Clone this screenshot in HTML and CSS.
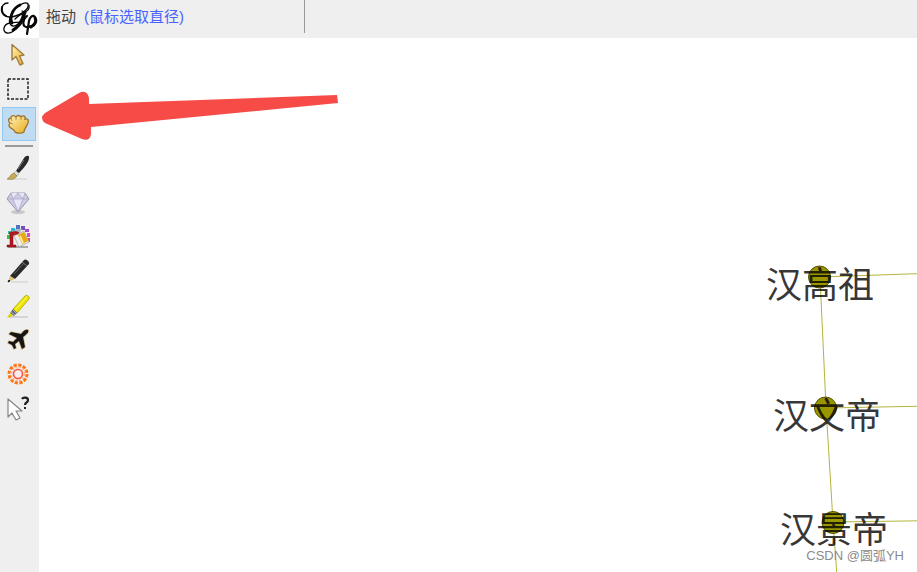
FILE: index.html
```html
<!DOCTYPE html>
<html lang="zh-CN">
<head>
<meta charset="utf-8">
<title>Gephi</title>
<link rel="stylesheet" href="styles.css">
</head>
<body>
<div class="app">
  <div class="logo">
    <svg viewBox="0 0 39 38" fill="none" stroke="#080808" stroke-linecap="round">
      <path d="M8 3C-1 3 0 17 9 17C19 17 30 9 28 4C26 1 14 6 11 15C7 24 12 29 18 24C22 21 25 15 26 12" stroke-width="1.400"/>
      <path d="M2 7C1 11 3 15 6 16" stroke-width="2"/>
      <path d="M20 5C13 8 9 17 12 23" stroke-width="2.800"/>
      <path d="M15 19C22 12 27 13 24 19C21 26 12 34 7 33C2 32 3 24 10 23C15 22 20 23 24 21" stroke-width="1.300"/>
      <path d="M24 13C22 21 18 27 13 30" stroke-width="2.800"/>
      <path d="M29 5C30 10 26 13 22 11" stroke-width="1.200"/>
      <path d="M27 16C22 20 22 28 28 27C33 27 37 22 35 17C33 14 30 17 29 21L27 34" stroke-width="2.200"/>
      <path d="M35 18C37 21 35 25 31 27" stroke-width="3"/>
    </svg>
  </div>
  <header class="bar">
    <span class="mode">拖动</span>
    <span class="hint">(鼠标选取直径)</span>
    <span class="divider"></span>
  </header>
  <nav class="tools">
    <div class="group group-select">
      <button class="tool" aria-label="选择"><svg viewBox="0 0 28 28"><defs><linearGradient id="gold" x2="1" y2="1"><stop offset="0" stop-color="#fff0b8"/><stop offset="1" stop-color="#e8ad1e"/></linearGradient></defs><path d="M8 3.500V19L12 15.500L16 24L19 22.500L15.500 15L20 14Z" fill="url(#gold)" stroke="#a17c42" stroke-width="1.400" stroke-linejoin="round"/></svg></button>
      <button class="tool" aria-label="矩形选择"><svg viewBox="0 0 28 28"><rect x="4" y="4" width="20" height="20" fill="none" stroke="#222" stroke-width="1.500" stroke-dasharray="3 1.500"/></svg></button>
      <button class="tool active" aria-label="拖动"><svg viewBox="0 0 28 28"><path d="M6 13C4 12 4 8 7 8C7 5 10 5 12 7C13 5 16 5 17 7C19 5 22 6 21 9C25 8 25 12 23 15C22 18 20 19 20 22C17 24 12 23 11 22C11 19 6 19 5 16C5 14 6 13 6 13Z" fill="url(#gold)" stroke="#9b7430" stroke-width="1.300"/><path d="M7 8L8 11M12 7V10M17 7V10M6 13L9 14" fill="none" stroke="#b69147"/></svg></button>
    </div>
    <hr class="rule">
    <div class="group group-edit">
      <button class="tool" aria-label="画笔"><svg viewBox="0 0 28 28"><path d="M8 25H23" stroke="#ccc"/><path d="M12 17L20 4C22 1 26 1 25 4C25 8 19 15 15 19Z" fill="#292929"/><path d="M14 15L20 6" stroke="#777"/><path d="M12 17L15 20L13 22L10 19Z" fill="#ddd" stroke="#999" stroke-width=".5"/><path d="M10 19L13 22C11 25 8 26 3 25C7 23 5 21 10 19Z" fill="#c8a956" stroke="#8d733c" stroke-width=".6"/></svg></button>
      <button class="tool" aria-label="尺寸"><svg viewBox="0 0 28 28"><ellipse cx="14" cy="23" rx="7" ry="2" fill="#c8c8c8"/><path d="M7 4H21L25 10L14 23L3 10Z" fill="#cdcbe5" stroke="#8986a1" stroke-width=".8"/><path d="M7 4L9 10L14 4L19 10L21 4ZM9 10L14 23L19 10Z" fill="#e7e6f7"/><path d="M3 10H25M7 4L9 10L14 4L19 10L21 4M9 10L14 23L19 10" fill="none" stroke="#a6a3bf" stroke-width=".7"/></svg></button>
      <button class="tool" aria-label="着色"><svg viewBox="0 0 28 28"><path d="M4 24H24" stroke="#aaa" stroke-width="2"/><rect x="3" y="12" width="3" height="4" fill="#32c43b"/><rect x="4" y="8" width="4" height="3" fill="#2dc799"/><rect x="7" y="5" width="4" height="3" fill="#26b7df"/><rect x="12" y="2" width="4" height="4" fill="#5471c7"/><rect x="17" y="3" width="4" height="4" fill="#7450b6"/><rect x="21" y="6" width="4" height="3" fill="#a54ad0"/><rect x="23" y="10" width="3" height="4" fill="#e647bd"/><rect x="23" y="15" width="3" height="4" fill="#ec476e"/><path d="M10 13L20 8L25 19L15 24Z" fill="#eeeeec" stroke="#999" stroke-width=".7"/><path d="M14 12L20 9L24 18L18 21Z" fill="#e7a80f"/><path d="M16 13L19 20" stroke="#ffe69b" stroke-width="2"/><path d="M11 6H18L15 11H10Z" fill="#aeb5c2"/><path d="M5 10C8 8 14 8 15 10C13 12 10 11 9 13V22H12V24H3V22H6V12Z" fill="#b51620" stroke="#800b14" stroke-width=".5"/></svg></button>
      <button class="tool" aria-label="铅笔"><svg viewBox="0 0 28 28"><path d="M7 25H24" stroke="#ccc"/><path d="M6 19L20 3C22 1 26 5 25 7L11 22Z" fill="#292929"/><path d="M10 17L20 6" stroke="#646464"/><path d="M18 5L23 9" stroke="#777"/><path d="M6 19L11 22L4 25Z" fill="#dcc07e"/><path d="M5 23L6 24L4 25Z" stroke="#222"/></svg></button>
      <button class="tool" aria-label="荧光笔"><svg viewBox="0 0 28 28"><path d="M5 25H24" stroke="#bbb"/><path d="M9 17L21 4C23 2 26 5 25 7L13 21Z" fill="#eee600" stroke="#a5a400" stroke-width=".8"/><path d="M12 17L23 5" stroke="#fff872"/><path d="M9 17L13 21L10 24L6 21Z" fill="#686877"/><path d="M7 20L11 23M9 18L12 21" stroke="#aaa"/><path d="M6 21L9 24L3 26Z" fill="#d8d400"/></svg></button>
      <button class="tool" aria-label="最短路径"><svg viewBox="0 0 28 28"><path d="M24 4C22 3 20 4 17 8L7 6L5 8L13 12L9 16L5 15L4 17L8 19L10 23L12 22L11 18L15 15L18 23L21 21L19 11C24 7 25 6 24 4Z" fill="#151515" stroke="#dbbb8b" stroke-width="1.500" paint-order="stroke"/></svg></button>
      <button class="tool" aria-label="热图"><svg viewBox="0 0 28 28" fill="none"><circle cx="14" cy="14" r="9" stroke="#ff7417" stroke-width="3" stroke-dasharray="3.200 1.512"/><circle cx="14" cy="14" r="6.500" stroke="#ffb071" stroke-width="1.200" stroke-dasharray="2 1.400"/><circle cx="14" cy="14" r="4.500" fill="#f8efef" stroke="#ff5147" stroke-width="1.600"/></svg></button>
      <button class="tool" aria-label="编辑"><svg viewBox="0 0 28 28"><path d="M4 4V22L8 18L12 25L16 23L12 16H18Z" fill="#fff" stroke="#858585" stroke-width="1.200" stroke-linejoin="round"/><path d="M18 4C19 2 24 2 24 5C24 8 21 7 21 10" fill="none" stroke="#222" stroke-width="2.200"/><path d="M20 12H22V14H20Z" fill="#222"/></svg></button>
    </div>
  </nav>
  <main class="canvas">
    <svg class="graph">
      <g transform="translate(-39 -38)">
        <g class="edges">
          <path d="M820 277L826 407L833 522L837 576M820 277L1200 264M826 408L1200 401M833 522L1200 517"/>
        </g>
        <g class="nodes">
          <circle cx="819.500" cy="277" r="11"/>
          <circle cx="825.500" cy="408" r="11"/>
          <circle cx="833" cy="522.500" r="11"/>
        </g>
        <g class="labels">
          <text x="820" y="298">汉高祖</text>
          <text x="827" y="429">汉文帝</text>
          <text x="834" y="543">汉景帝</text>
        </g>
        <path class="arrow" d="M337 95L89 104V98Q87 89 79 93L45 113Q39 118 45 123L82 139Q90 142 91 134V127L338 103Z"/>
      </g>
    </svg>
    <span class="credit">CSDN @圆弧YH</span>
  </main>
</div>
</body>
</html>
```
FILE: styles.css
```css
* {
  box-sizing: border-box;
}

body {
  margin: 0;
  font-family: "Liberation Sans", "Noto Sans CJK SC", sans-serif;
  background: #fff;
}

.app {
  display: grid;
  grid-template-columns: 39px 1fr;
  grid-template-rows: 38px 1fr;
  height: 100vh;
  overflow: hidden;
}

.logo {
  background: #fff;
}

.logo svg {
  display: block;
  width: 100%;
  height: 100%;
}

.bar {
  display: flex;
  align-items: flex-start;
  gap: 8px;
  padding: 0 7px;
  background: #efefef;
  font-size: 15px;
  line-height: 33px;
}

.mode {
  color: #444;
}

.hint {
  color: #4963ff;
}

.divider {
  width: 1px;
  height: 33px;
  margin-left: 112px;
  background: #999;
}

.tools {
  padding: 0 3px 0 2px;
  background: #efefef;
}

.group {
  display: grid;
  grid-auto-rows: 1fr;
}

.group-select {
  height: 103px;
}

.group-edit {
  height: 275px;
}

.rule {
  width: 28px;
  height: 2px;
  margin: 4px 3px;
  border: 0;
  background: #999;
}

.tool {
  display: flex;
  align-items: center;
  justify-content: flex-start;
  padding: 0 1px;
  border: 1px solid transparent;
  background: none;
}

.tool svg {
  width: 28px;
  height: 28px;
}

.tool.active {
  border-color: #90c8f6;
  background: #bfdcf3;
}

.canvas {
  position: relative;
  overflow: hidden;
}

.graph {
  display: block;
  width: 100%;
  height: 100%;
}

.edges {
  fill: none;
  stroke: #b4b43c;
  stroke-width: 1;
}

.nodes {
  fill: #999600;
  stroke: #555300;
  stroke-width: 1;
}

.labels {
  fill: #000;
  fill-opacity: 0.8;
  font-size: 36px;
  font-weight: 400;
  text-anchor: middle;
}

.arrow {
  fill: #f74b47;
}

.credit {
  position: absolute;
  right: 13px;
  bottom: 6px;
  color: #8c8c8c;
  font-size: 13px;
  line-height: 20px;
}
```
